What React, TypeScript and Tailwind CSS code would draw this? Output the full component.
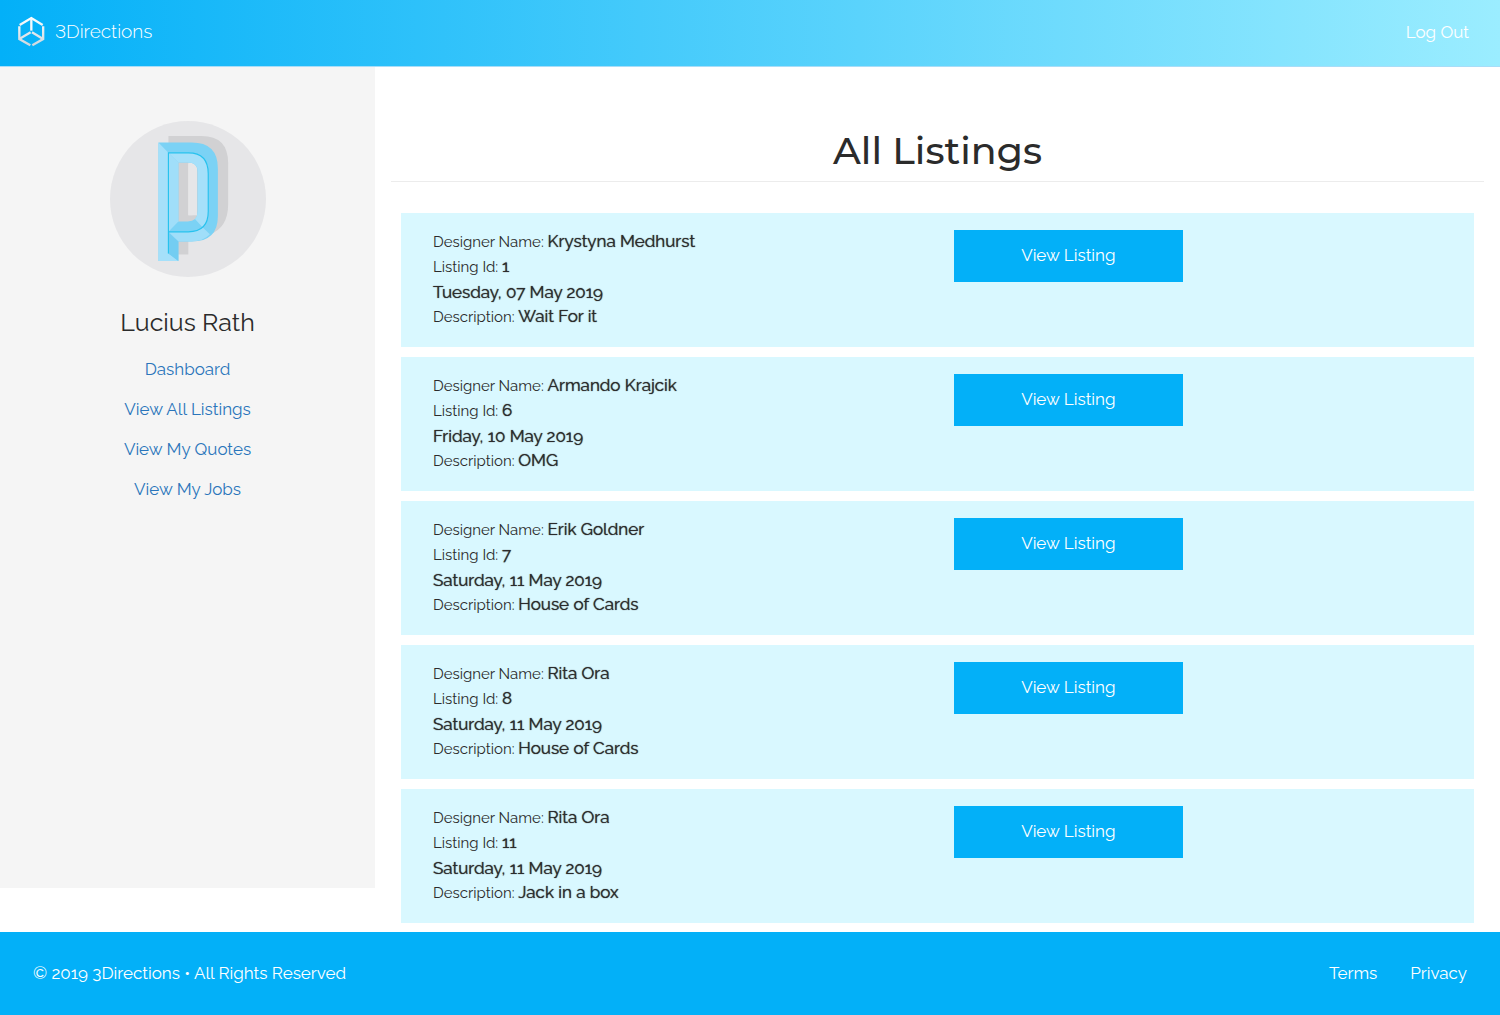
const listings = [
  { designer: 'Krystyna Medhurst', id: 1, date: 'Tuesday, 07 May 2019', description: 'Wait For it' },
  { designer: 'Armando Krajcik', id: 6, date: 'Friday, 10 May 2019', description: 'OMG' },
  { designer: 'Erik Goldner', id: 7, date: 'Saturday, 11 May 2019', description: 'House of Cards' },
  { designer: 'Rita Ora', id: 8, date: 'Saturday, 11 May 2019', description: 'House of Cards' },
  { designer: 'Rita Ora', id: 11, date: 'Saturday, 11 May 2019', description: 'Jack in a box' },
];

const navItems = ['Dashboard', 'View All Listings', 'View My Quotes', 'View My Jobs'];

function LogoMark() {
  return (
    <svg viewBox="50 46 84 93" className="h-[31px] w-7" fill="none" aria-hidden="true">
      <defs>
        <linearGradient id="mark" x1="0" y1="48" x2="0" y2="137" gradientUnits="userSpaceOnUse">
          <stop offset="0" stopColor="#ffffff" />
          <stop offset="1" stopColor="#ccd6de" />
        </linearGradient>
      </defs>
      <g stroke="url(#mark)" strokeWidth="7">
        <path d="M58 73 L93 52 L127 73" />
        <path d="M57 77 V115 L90 134" />
        <path d="M128.500 77 V115 L96 134" />
        <path d="M58 114 L91 95" />
        <path d="M127 114 L95 95" />
      </g>
      <rect x="89.500" y="53" width="7" height="37" fill="#f4f8fb" />
    </svg>
  );
}

function Avatar() {
  return (
    <svg viewBox="28 31 470 470" className="size-39" role="img" aria-label="Profile picture">
      <circle cx="263" cy="266" r="235" fill="#e6e6e8" />
      <path
        fillRule="evenodd"
        fill="#d1d1d3"
        d="M204 76 H304 Q384 76 384 158 V282 Q384 354 326 374 H264 V433 H204 Z M264 137 V315 H290 V160 Q290 137 264 137 Z"
      />
      <path d="M264 160 H290 V300 L276 315 H264 Z" fill="#e6e6e8" />
      <path
        fillRule="evenodd"
        fill="#7bd2f5"
        d="M174 96 H274 Q353 96 353 174 V318 Q353 394 274 394 H234 V453 H174 Z M234 156 V334 H262 Q292 334 292 304 V184 Q292 156 262 156 Z"
      />
      <path d="M174 96 L204 127 V430 L234 453 H174 Z" fill="#a5e0fa" />
      <path d="M204 127 L234 156 V334 L204 365 Z" fill="#a0def9" />
      <path d="M204 127 H264 Q324 127 324 190 V305 Q324 336 306 350 L284 326 Q292 318 292 304 V184 Q292 156 262 156 H234 Z" fill="#a5e0fa" />
      <path d="M204 365 H264 Q290 365 306 350 L329 372 Q310 394 270 394 H234 Z" fill="#a0def9" />
      <path d="M204 368 L234 394 V453 L204 430 Z" fill="#73cdf2" />
      <path d="M204 430 V127 H264 Q324 127 324 190 V304 Q324 365 264 365 H204" fill="none" stroke="#27c2ee" strokeWidth="3.500" />
    </svg>
  );
}

export default function App() {
  return (
    <div className="flex min-h-screen flex-col bg-white font-['Raleway','Lato',sans-serif] text-[17px] text-[#2b2b2b]">
      <header className="flex h-[67px] items-center justify-between border-b border-[#a8ddf8] bg-linear-to-r/srgb from-[#03b0f8] to-[#9bedff] pr-[31px] pl-[17px] text-white">
        <a href="#" className="flex items-center gap-2.5 pb-1">
          <LogoMark />
          <span className="text-[19px] leading-8 font-light lining-nums">3Directions</span>
        </a>
        <a href="#">Log Out</a>
      </header>

      <div className="flex flex-1 items-start">
        <aside className="flex min-h-[821px] w-1/4 flex-col items-center bg-[#f5f5f5] pt-[54px]">
          <Avatar />
          <h2 className="mt-[27px] text-[25px] leading-9">Lucius Rath</h2>
          <nav className="mt-[9px] flex flex-col items-center text-[#2a75bb]">
            {navItems.map((item) => (
              <a key={item} href="#" className="py-2 leading-6">
                {item}
              </a>
            ))}
          </nav>
        </aside>

        <main className="w-3/4 px-4 pt-[60px]">
          <h1 className="border-b border-[#ececec] pb-[6px] text-center font-['Montserrat','Inter',sans-serif] text-[38px] leading-[48px] font-medium">
            All Listings
          </h1>
          <div className="flex flex-col gap-2.5 px-2.5 pt-[31px] pb-[9px]">
            {listings.map((listing) => (
              <article key={listing.id} className="grid grid-cols-2 bg-[#d9f8ff] px-4 py-[17px]">
                <div className="px-4 text-[15px] leading-[25px]">
                  <p>
                    Designer Name: <span className="text-[17px] leading-none [text-shadow:0_0_1px]">{listing.designer}</span>
                  </p>
                  <p>
                    Listing Id: <span className="text-[17px] leading-none [text-shadow:0_0_1px]">{listing.id}</span>
                  </p>
                  <p className="text-[17px] [text-shadow:0_0_1px]">{listing.date}</p>
                  <p>
                    Description: <span className="text-[17px] leading-none [text-shadow:0_0_1px]">{listing.description}</span>
                  </p>
                </div>
                <div className="px-4">
                  <button type="button" className="h-[52px] w-[47%] bg-[#03b0f8] text-white">
                    View Listing
                  </button>
                </div>
              </article>
            ))}
          </div>
        </main>
      </div>

      <footer className="flex items-center justify-between bg-[#03b0f8] px-[33px] py-[29px] leading-[25px] text-white">
        <p>© 2019 3Directions • All Rights Reserved</p>
        <nav className="flex gap-[33px]">
          <a href="#">Terms</a>
          <a href="#">Privacy</a>
        </nav>
      </footer>
    </div>
  );
}
